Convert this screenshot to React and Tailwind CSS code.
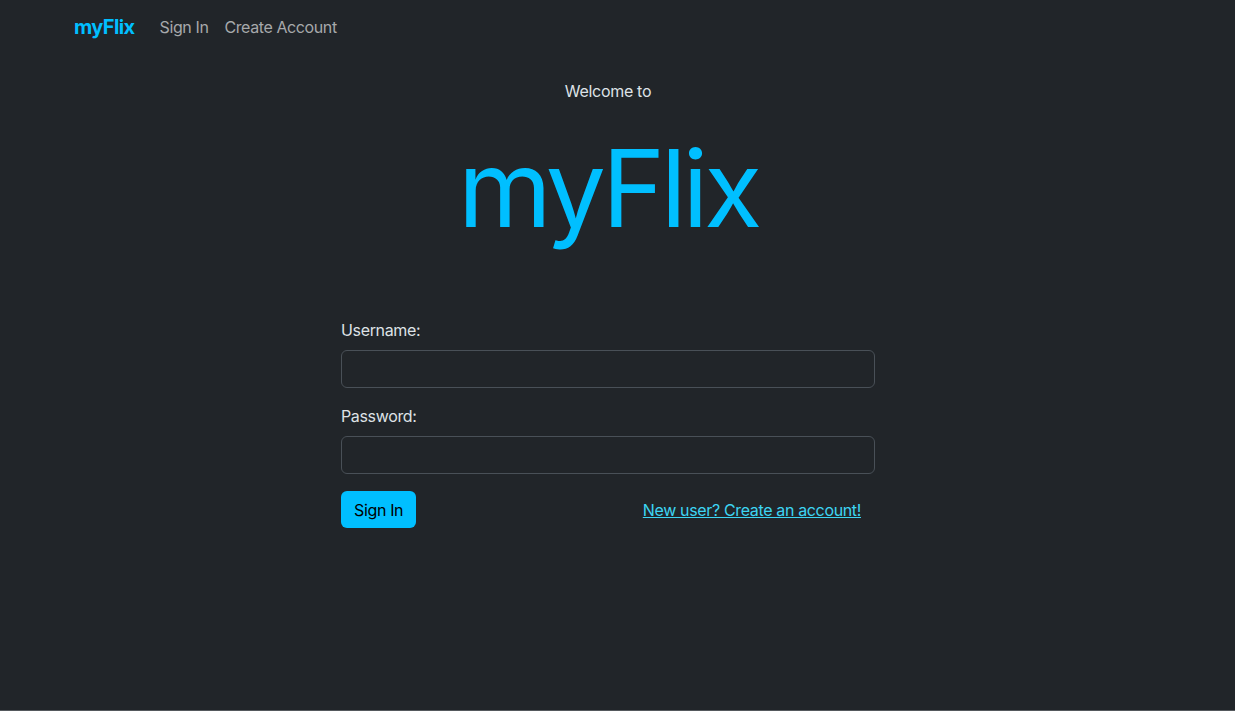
export default function App() {
  return (
    <div className="min-h-[711px] h-[711px] bg-[#212529] flex flex-col text-[#dee2e6] border-b border-[#55595d]" style={{ fontFamily: 'Inter, "Noto Sans", sans-serif' }}>
      <nav className="h-[54px] flex items-center pl-[74px] gap-4 tracking-[-0.4px]">
        <span className="text-[20px] font-bold text-[#00bfff] tracking-[-0.6px] mr-[9px]">myFlix</span>
        <span className="text-[16px] text-[#a7a9ab]">Sign In</span>
        <span className="text-[16px] text-[#a7a9ab]">Create Account</span>
      </nav>
      <div className="flex flex-col items-center pr-[19px]">
        <p className="mt-[27px] text-[16px] leading-[20px] tracking-[-0.3px]">Welcome to</p>
        <h1 className="mt-[22px] text-[107px] leading-[130px] text-[#00bfff] tracking-[-4.4px]">myFlix</h1>
        <form className="w-[534px] mt-[65px] flex flex-col tracking-[-0.35px]">
          <label className="text-[16px] leading-[24px]">Username:</label>
          <input className="mt-[8px] h-[38px] rounded-[6px] border border-[#495057] bg-[#212529] outline-none" />
          <label className="mt-[16px] text-[16px] leading-[24px]">Password:</label>
          <input type="password" className="mt-[8px] h-[38px] rounded-[6px] border border-[#495057] bg-[#212529] outline-none" />
          <div className="mt-[17px] flex items-center justify-between pr-[14px]">
            <button type="button" className="h-[37px] px-[13px] rounded-[6px] bg-[#00bfff] text-black text-[16px]">Sign In</button>
            <a className="text-[16px] text-[#3dd5f3] underline">New user? Create an account!</a>
          </div>
        </form>
      </div>
    </div>
  );
}
